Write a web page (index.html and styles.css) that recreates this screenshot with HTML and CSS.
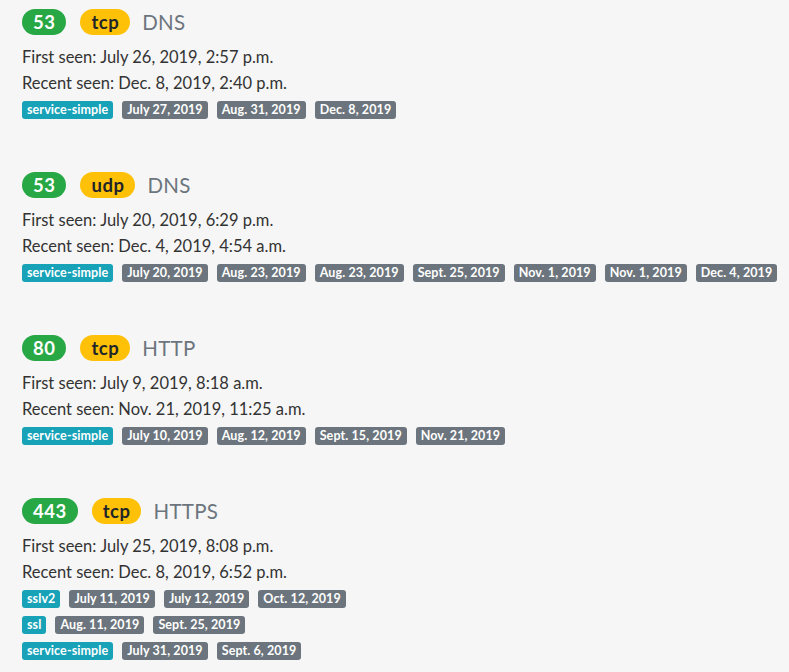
FILE: index.html
```html
<!DOCTYPE html>
<html lang="en">
<head>
<meta charset="utf-8">
<title>Ports</title>
<link rel="stylesheet" href="styles.css">
</head>
<body>
<div class="ports">
  <section class="port">
    <h4 class="port-head"><span class="pill pill-port">53</span><span class="pill pill-proto">tcp</span><span class="svc">DNS</span></h4>
    <p class="seen">First seen: July 26, 2019, 2:57 p.m.</p>
    <p class="seen">Recent seen: Dec. 8, 2019, 2:40 p.m.</p>
    <div class="tags"><span class="tag tag-info">service-simple</span><span class="tag">July 27, 2019</span><span class="tag">Aug. 31, 2019</span><span class="tag">Dec. 8, 2019</span></div>
  </section>
  <section class="port">
    <h4 class="port-head"><span class="pill pill-port">53</span><span class="pill pill-proto">udp</span><span class="svc">DNS</span></h4>
    <p class="seen">First seen: July 20, 2019, 6:29 p.m.</p>
    <p class="seen">Recent seen: Dec. 4, 2019, 4:54 a.m.</p>
    <div class="tags"><span class="tag tag-info">service-simple</span><span class="tag">July 20, 2019</span><span class="tag">Aug. 23, 2019</span><span class="tag">Aug. 23, 2019</span><span class="tag">Sept. 25, 2019</span><span class="tag">Nov. 1, 2019</span><span class="tag">Nov. 1, 2019</span><span class="tag">Dec. 4, 2019</span></div>
  </section>
  <section class="port">
    <h4 class="port-head"><span class="pill pill-port">80</span><span class="pill pill-proto">tcp</span><span class="svc">HTTP</span></h4>
    <p class="seen">First seen: July 9, 2019, 8:18 a.m.</p>
    <p class="seen">Recent seen: Nov. 21, 2019, 11:25 a.m.</p>
    <div class="tags"><span class="tag tag-info">service-simple</span><span class="tag">July 10, 2019</span><span class="tag">Aug. 12, 2019</span><span class="tag">Sept. 15, 2019</span><span class="tag">Nov. 21, 2019</span></div>
  </section>
  <section class="port">
    <h4 class="port-head"><span class="pill pill-port">443</span><span class="pill pill-proto">tcp</span><span class="svc">HTTPS</span></h4>
    <p class="seen">First seen: July 25, 2019, 8:08 p.m.</p>
    <p class="seen">Recent seen: Dec. 8, 2019, 6:52 p.m.</p>
    <div class="tags"><span class="tag tag-info">sslv2</span><span class="tag">July 11, 2019</span><span class="tag">July 12, 2019</span><span class="tag">Oct. 12, 2019</span></div>
    <div class="tags"><span class="tag tag-info">ssl</span><span class="tag">Aug. 11, 2019</span><span class="tag">Sept. 25, 2019</span></div>
    <div class="tags"><span class="tag tag-info">service-simple</span><span class="tag">July 31, 2019</span><span class="tag">Sept. 6, 2019</span></div>
  </section>
</div>
</body>
</html>
```
FILE: styles.css
```css
html, body {
  margin: 0;
  padding: 0;
}
body {
  background: #f6f6f6;
  color: #333;
  font-family: "Lato", "Noto Sans", sans-serif;
  font-size: 16px;
}
.ports {
  display: flex;
  flex-direction: column;
  gap: 53px;
  padding: 9px 22px 0;
}
.port {
  display: flex;
  flex-direction: column;
}
.port-head {
  display: flex;
  align-items: center;
  gap: 14px;
  height: 26px;
  margin: 0 0 9px;
  font-weight: 400;
}
.pill {
  display: inline-block;
  height: 26px;
  line-height: 26px;
  padding: 0 11px;
  border-radius: 13px;
  font-size: 18.5px;
  letter-spacing: 0.5px;
  font-weight: 700;
}
.pill-port {
  background: #28a745;
  color: #fff;
}
.pill-proto {
  background: #ffc107;
  color: #212529;
}
.svc {
  margin-left: -2px;
  font-size: 20.5px;
  letter-spacing: 0.3px;
  color: #6c757d;
}
.seen {
  margin: 0;
  line-height: 26px;
  font-size: 16.5px;
}
.tags {
  display: flex;
  flex-wrap: nowrap;
  gap: 9px;
  margin-top: 5px;
}
.tags + .tags {
  margin-top: 8px;
}
.tag {
  display: inline-block;
  height: 18px;
  line-height: 18px;
  padding: 0 5px;
  border-radius: 3px;
  font-size: 12.5px;
  letter-spacing: 0.1px;
  font-weight: 700;
  color: #fff;
  background: #6c757d;
  white-space: nowrap;
}
.tag-info {
  background: #17a2b8;
}
```
